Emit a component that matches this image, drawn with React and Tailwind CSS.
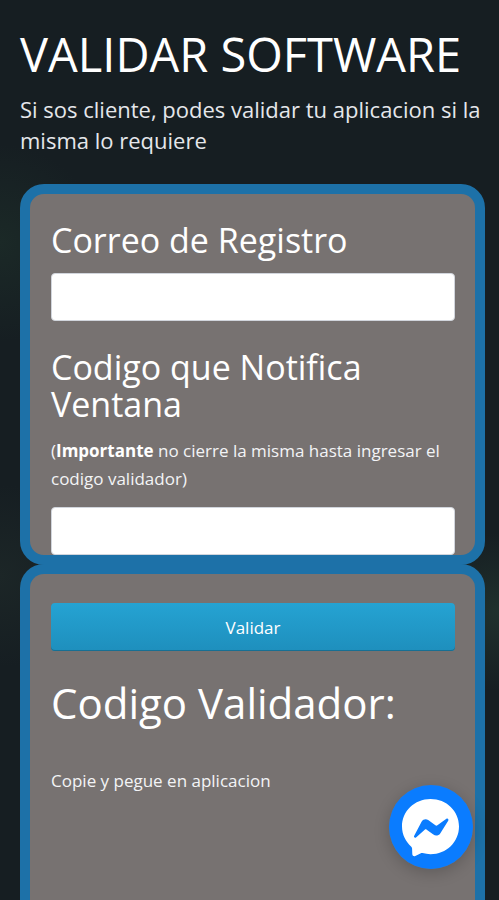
import { useState } from 'react';

const inputClass =
  'block h-12 w-full rounded border border-gray-300 bg-white px-4 text-[17px] text-gray-700 outline-none';

function MessengerIcon() {
  return (
    <svg className="h-full w-full" viewBox="0 0 84 84" aria-hidden="true">
      <circle cx="42" cy="42" r="42" fill="#0a7cff" />
      <path
        d="M41.5 14C25.500 14 13 26.200 13 41.500c0 8.300 3.800 15.200 9.300 20.200.6.600.8 1.200.8 2l.2 5.500c.1 1.600 1.700 2.400 3 1.700l5.600-2.700c.6-.3 1.100-.3 1.700-.1 2.600.7 5.200 1.100 7.900 1.100C57.500 69.200 70 57 70 41.500S57.500 14 41.500 14z"
        fill="#fff"
      />
      <path
        d="M25.200 50.800l7.500-14.300c1.400-2.400 4.300-3.100 6.500-1.500l7.200 5.300c.6.500 1.400.5 2 0l9-6.500c1.300-1 2.600.6 1.800 1.900l-8 12.700c-1.400 2.200-4.600 2.900-6.800 1.200l-6.700-4.900c-.6-.5-1.400-.5-2 0l-8.700 7.700c-1.100.9-2.600-.4-1.800-1.600z"
        fill="#0a7cff"
      />
    </svg>
  );
}

function Panel({ className, children }) {
  return (
    <div className={`border-[10px] border-[#1d71a8] bg-[#777271] pr-5 pl-[21px] ${className}`}>
      {children}
    </div>
  );
}

export default function App() {
  const [email, setEmail] = useState('');
  const [code, setCode] = useState('');

  return (
    <main className="flex min-h-screen flex-col bg-[#161e22] bg-[radial-gradient(circle_at_0%_27%,#1b2927_0%,transparent_12%),radial-gradient(circle_at_100%_68%,#20312d_0%,transparent_10%),radial-gradient(circle_at_0%_64%,#1c2627_0%,transparent_12%)] pt-6 pr-3.5 pl-5 font-['Open_Sans',sans-serif] text-white">
      <header className="mb-7">
        <h1 className="text-[47px] leading-[60px]">VALIDAR SOFTWARE</h1>
        <p className="mt-2.5 text-[22px] leading-[31px] text-gray-200">
          Si sos cliente, podes validar tu aplicacion si la misma lo requiere
        </p>
      </header>

      <form className="flex grow flex-col" onSubmit={(e) => e.preventDefault()}>
        <Panel className="rounded-[24px] pt-7">
          <label htmlFor="email" className="mb-3.5 block text-[34px] leading-[37px]">
            Correo de Registro
          </label>
          <input
            id="email"
            type="email"
            value={email}
            onChange={(e) => setEmail(e.target.value)}
            className={inputClass}
          />

          <label htmlFor="code" className="mt-7 mb-3.5 block text-[34px] leading-[37px]">
            Codigo que Notifica Ventana
          </label>
          <p id="code-help" className="mb-3.5 text-[17px] leading-7 text-gray-100">
            (<strong className="text-white">Importante</strong> no cierre la misma hasta ingresar el
            codigo validador)
          </p>
          <input
            id="code"
            type="text"
            aria-describedby="code-help"
            value={code}
            onChange={(e) => setCode(e.target.value)}
            className={inputClass}
          />
        </Panel>

        <Panel className="-mt-px grow rounded-t-[24px] border-b-0 pt-[29px]">
          <button
            type="submit"
            className="block h-12 w-full cursor-pointer rounded bg-linear-to-b from-[#25a3d3] to-[#1e8fbd] pt-0.5 text-[17px] shadow-[inset_0_-1px_0_#176f93]"
          >
            Validar
          </button>
          <h2 className="mt-7 text-[42px] leading-[48px]">Codigo Validador:</h2>
          <p className="mt-10 text-[17px] leading-7 text-gray-100">Copie y pegue en aplicacion</p>
        </Panel>
      </form>

      <button
        type="button"
        aria-label="Messenger"
        className="fixed right-[26px] bottom-[31px] h-[84px] w-[84px] cursor-pointer rounded-full shadow-[0_4px_16px_rgba(0,0,0,0.2)]"
      >
        <MessengerIcon />
      </button>
    </main>
  );
}
